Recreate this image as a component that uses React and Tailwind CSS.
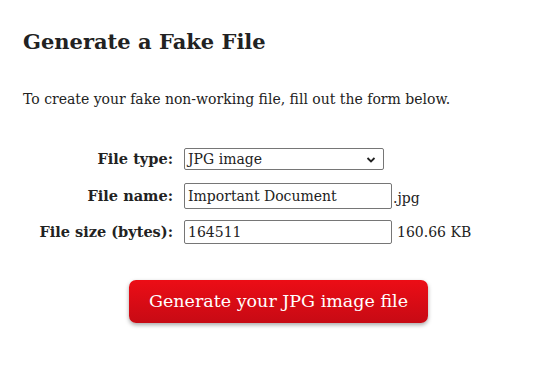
export default function App() {
  return (
    <div className="w-[534px] h-[386px] bg-white text-[#222] font-['DejaVu_Serif',Georgia,serif] pl-[23px] pt-[27px]">
      <h1 className="text-[21px] font-bold leading-[30px] text-[#222]">Generate a Fake File</h1>
      <p className="mt-[32px] text-[14px] leading-[20px]">To create your fake non-working file, fill out the form below.</p>
      <div className="mt-[39px] flex flex-col text-[14px]">
        <div className="flex items-center h-[22px]">
          <div className="w-[150px] text-right font-bold text-[14.5px]">File type:</div>
          <div className="ml-[11px] relative w-[200px] h-[22px] border border-[#767676] rounded-[2px] flex items-center px-[3px]">
            <span>JPG image</span>
            <svg className="absolute right-[7px] top-[7px]" width="10" height="8" viewBox="0 0 10 8"><path d="M1.5 2 L5 5.5 L8.5 2" fill="none" stroke="#222" strokeWidth="1.8" /></svg>
          </div>
        </div>
        <div className="mt-[13px] flex items-center h-[26px]">
          <div className="w-[150px] text-right font-bold text-[14.5px]">File name:</div>
          <div className="ml-[11px] w-[208px] h-[26px] border border-[#767676] rounded-[2px] flex items-center px-[3px]">Important Document</div>
          <span className="ml-[1px] mt-[4px]">.jpg</span>
        </div>
        <div className="mt-[11px] flex items-center h-[24px]">
          <div className="w-[150px] text-right font-bold text-[14.5px]">File size (bytes):</div>
          <div className="ml-[11px] w-[208px] h-[24px] border border-[#767676] rounded-[2px] flex items-center px-[3px]">164511</div>
          <span className="ml-[5px]">160.66 KB</span>
        </div>
      </div>
      <div className="mt-[36px] ml-[106px] w-[299px] h-[43px] rounded-[7px] bg-gradient-to-b from-[#ec0d16] to-[#c70a14] shadow-[0_2px_4px_rgba(0,0,0,0.35)] flex items-center justify-center text-white text-[17.5px]">
        Generate your JPG image file
      </div>
    </div>
  );
}
